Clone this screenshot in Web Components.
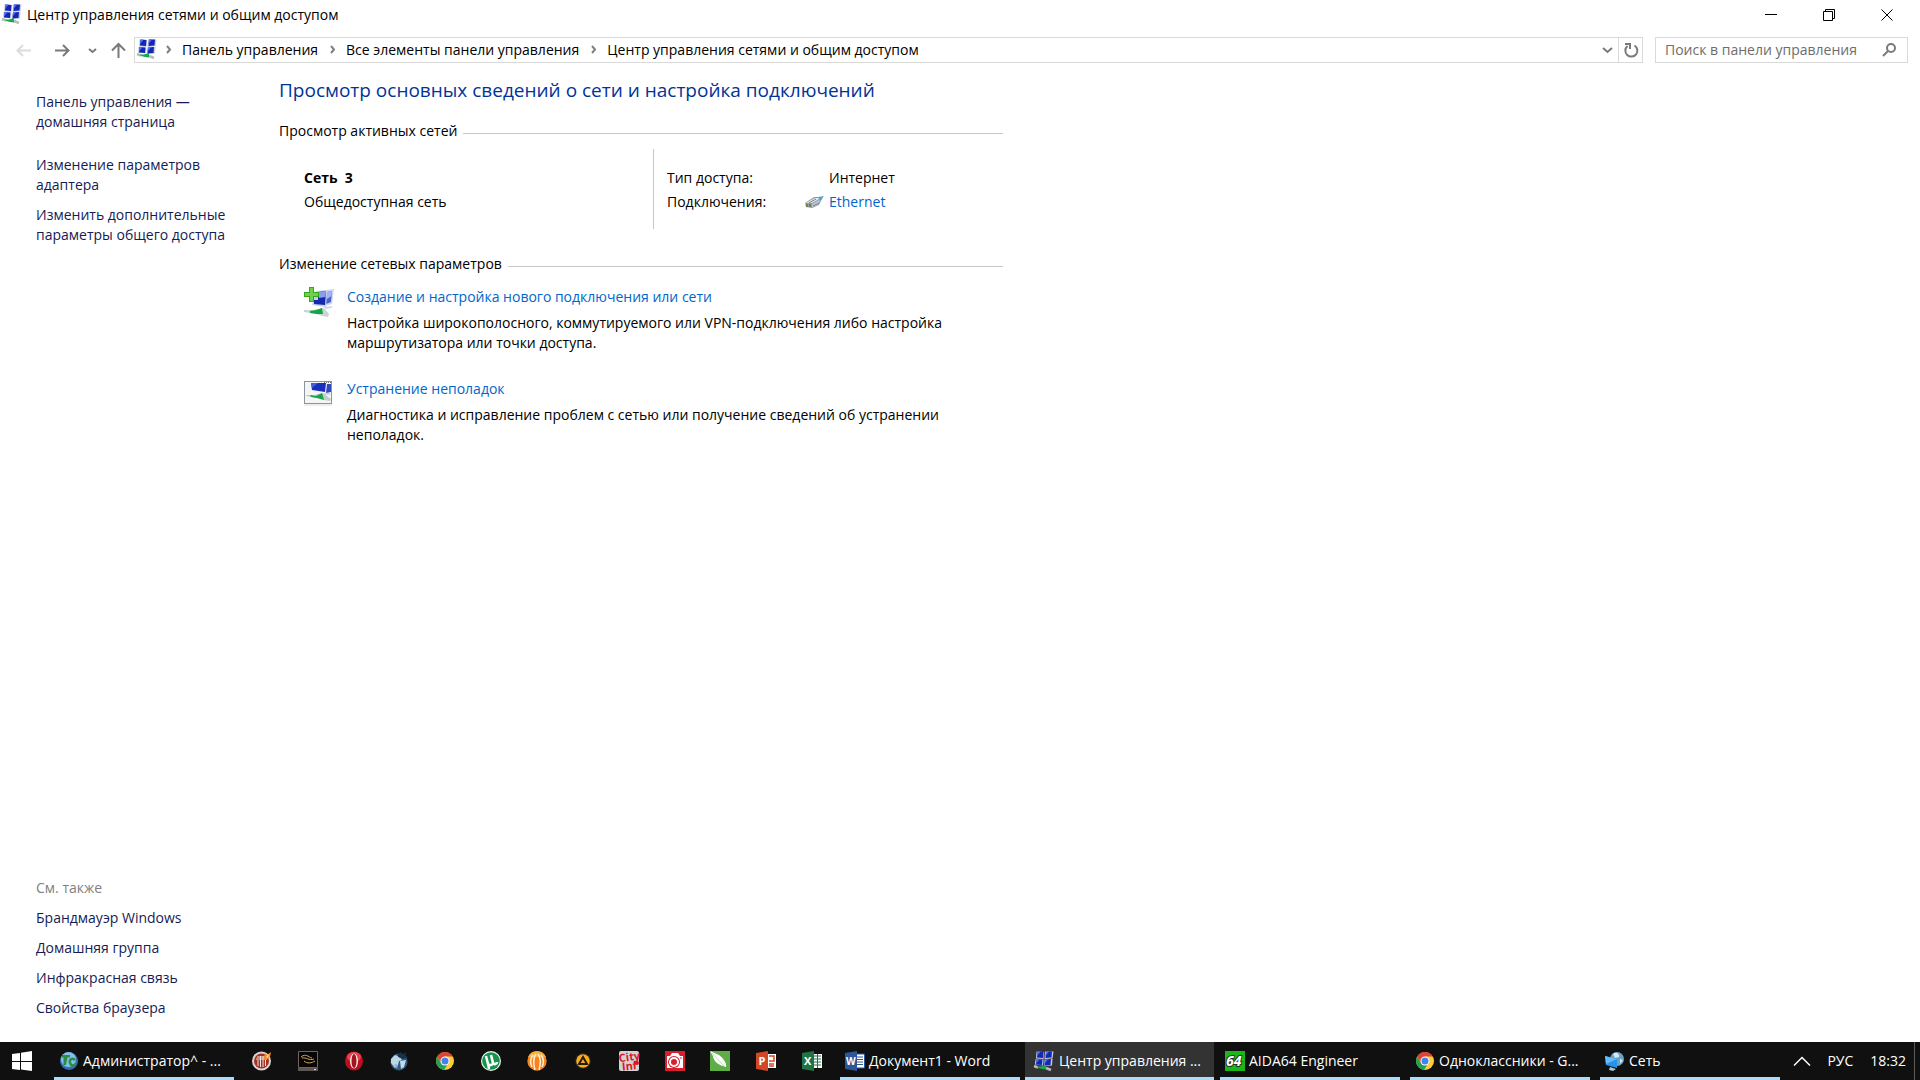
<!DOCTYPE html>
<html lang="ru">
<head>
<meta charset="utf-8">
<title>Центр управления сетями и общим доступом</title>
<style>
  html, body { height: 100%; }
  body {
    margin: 0;
    background: #fff;
    color: #000;
    font: 14px/20px "Open Sans", "Noto Sans", sans-serif;
  }
</style>
</head>
<body>
<network-center></network-center>

<script>
const icons = {
  network: `<path d="M1.500 .5l7.500 .5-.5 7-7.500-.5zM10 .5h8.500l-1 7-8 .5zM.5 8l8 .5-.5 6-8-1zM9.500 8.500l8-.5-.5 6.500-8 .5z" fill="#c3cce6"/>
    <path d="M2.500 .5l6 .5-.5 6-6-.5zM11 .5h6l-.5 6-6 .5zM1.500 8l6 .5-.5 5.500-6-.5zM10 8.500l6-.5-.5 6-6 .5z" fill="#1226b8"/>
    <path d="M2.500 .5l3 .3L2 5zM11 .5h3l-3.500 4.500zM1.500 8l3 .3L1 12.500zM10 8.500l3-.3-3.300 4.300z" fill="#5874e4"/>
    <path d="M-1 15l4 1.500M11 17l5 2" stroke="#b4bdb8" stroke-width="2.500"/>
    <path d="M2 15.500l4 0 5-1.500v4.500l-4-.5-4-1z" fill="#18a94c"/>`,
  newConnection: `<path d="M22 3l8-1-2 15-7 2z" fill="#cdd7f2"/><path d="M23 5l5-1-1 11-5 2z" fill="#4a62cf"/>
    <path d="M23 5l5-1-.5 5-4.500 3z" fill="#a4b4f0"/>
    <path d="M12 4l11-1-1 17-14-2z" fill="#c4cfea"/><path d="M14 5l8-1-1 14-11-1v-4h4z" fill="#1428b0"/>
    <path d="M15 5l7-1-.5 6-6.500 1z" fill="#8b9dee"/>
    <path d="M19 20l9-1v2l-6 1z" fill="#d6dae0"/>
    <path d="M0 23l9 0 11-2 5 6-1 3-6-1-6-2-12-2z" fill="#ccd6d0"/>
    <path d="M6 24l6-1 6-2 1 6-6 0-7-1z" fill="#16a34a"/>
    <path d="M5 0h5v5h5v5h-5v5H5v-5H0V5h5z" fill="#36a51f"/><path d="M6 1h3v5h5v3H9v5H6V9H1V6h5z" fill="#6fd04c"/>`,
  troubleshoot: `<rect x=".5" y="2.500" width="27" height="22" fill="#f3f5f7" stroke="#8d949b"/>
    <path d="M0 26h28" stroke="#dcdcdc"/><path d="M20 3.500h7" stroke="#687078" stroke-dasharray="1 1"/>
    <path d="M7 4h15l-1 9-13-2z" fill="#1a2fbd"/><path d="M7 4h7l-6 5z" fill="#4560d8"/>
    <path d="M23 5h4v8l-5 1z" fill="#3149b8"/><path d="M20 14h6v2h-5z" fill="#d2d6dc"/>
    <path d="M2 16l8 0 9-2 8 6-1 2-6-1-6-2-12-2z" fill="#c3cdc8"/><path d="M6 16l6 1 6-3 2 7-7-2-6-1z" fill="#16a34a"/>`,
  ethernet: `<path d="M0 8l9-6 9 0-4 8-7 3-6-1z" fill="#939ca8"/><path d="M1 8l9-5 6 0-9 5z" fill="#e2e6ec"/>
    <path d="M7 9l9-5-3 6-6 2z" fill="#bcc5d2"/>
    <path d="M4 8l7-4M8 11l6-3" stroke="#76818f"/><path d="M1 9h2v3H1zM4 9h2v3H4z" fill="#777f4e"/>
    <path d="M13 2l6-1-4 5z" fill="#49a9cc"/>`,
  start: `<path d="M0 3l8-1v8H0zM9 1.800L20 0v10H9zM0 11h8v8l-8-1zM9 11h11v9L9 18.500z" fill="#fff"/>`,
  commander: `<circle cx="10" cy="10" r="9" fill="#2f72b4"/><circle cx="9.500" cy="8.500" r="7.500" fill="#86bfe9"/>
    <path d="M3 4h8v2.500H8.500L7 14H4.500V6.500H3z" fill="#2c8c45"/><path d="M16 9c-3-3-6 0-5 3s4 3 6 1" fill="none" stroke="#2c8c45" stroke-width="2.500"/>`,
  temple: `<circle cx="9.500" cy="10" r="9.500" fill="#d8d6d3"/><circle cx="9.500" cy="10" r="7.500" fill="#a33127"/>
    <path d="M4 8h11M6 9v6M8.500 5v11M11 5v11M13.500 9v6M5 6h9" stroke="#eee4dd"/>
    <path d="M12 7l1-5 2 2 4-3-1 5-4 3z" fill="#ff8a1c"/><path d="M14 6l3-3-1 4z" fill="#ffe08a"/>`,
  monitor: `<path d="M.5 .5h19v16H.5z" fill="#080605" stroke="#77625a"/><path d="M0 17h20v3H0z" fill="#5e5652"/><path d="M16 18.500h2" stroke="#ddd"/>
    <path d="M3 6c5-4 7 0 11 1M6 10c3 3 8 2 11 0M4 7c4-1 7 3 12 1" stroke="#d5a653" fill="none"/>`,
  opera: `<ellipse cx="10" cy="10" rx="9" ry="9.500" fill="#b8101d"/><ellipse cx="10" cy="6" rx="7" ry="5" fill="#e4434c"/>
    <ellipse cx="10" cy="10" rx="4" ry="7.500" fill="#f8eeee"/><ellipse cx="10" cy="10" rx="2.500" ry="7" fill="#a3121e"/>`,
  globe: `<circle cx="10" cy="11" r="8.500" fill="#315b80"/><path d="M2 8l4-4 5 2 2 3-3 1-1 4-3 3-4-5z" fill="#b9d7e7"/>
    <path d="M11 10l6-1-2 7-3 2z" fill="#c3dbe9"/><path d="M5 13l4 1-1 4z" fill="#83abc7"/><path d="M9 3l3-2 1 2 5-1-2 2 3 3-5 1-5-2z" fill="#15354e"/>`,
  chrome: `<circle cx="10" cy="10" r="9" fill="#fc3"/>
    <path d="M2.200 5.500a9 9 0 0 0 6.800 13.400L13.500 12 6 12z" fill="#21a05a"/>
    <path d="M2.200 5.500A9 9 0 0 1 17.800 5.500H10l-4 6z" fill="#dc4437"/>
    <circle cx="10" cy="10" r="4.500" fill="#fff"/><circle cx="10" cy="10" r="3.500" fill="#3f83ee"/>`,
  torrent: `<circle cx="10" cy="10" r="10" fill="#eef7ef"/><circle cx="10" cy="10" r="8.800" fill="#16934c"/>
    <path d="M5 5l2 8c1 2 5 1 5-1L10 4M12 12c1 2 4 1 4-1M7 12l1 6" fill="none" stroke="#fff" stroke-width="2.500"/>`,
  comet: `<circle cx="10" cy="10" r="9.700" fill="#f98220"/><path d="M10 0a10 10 0 0 1 9 6H1a10 10 0 0 1 9-6z" fill="#fbb040"/>
    <path d="M9 3C6 7 6 12 8 19M11 3c3 4 3 9 1 16M6 4c-3 4-3 8-1 12M14 4c3 4 3 8 1 12" stroke="#fff0d2" stroke-width="1.500" fill="none"/>`,
  aimp: `<circle cx="10" cy="10" r="8" fill="#26221c"/><circle cx="10" cy="10" r="6.800" fill="#f8ac24"/>
    <path d="M10 6l4 7H6z" fill="none" stroke="#2b1c05" stroke-width="2"/>`,
  city: `<rect width="20" height="20" rx="2" fill="#cfd3d7"/>
    <text x="0" y="10" font-size="11" font-weight="700" fill="#e3131f" transform="rotate(-8 9 8)">City</text>
    <text x="3" y="19" font-size="11" font-weight="700" fill="#e3131f" transform="rotate(-5 9 16)">Inf</text><circle cx="18" cy="12" r="2" fill="#e3131f"/>`,
  camera: `<path d="M0 0h20v20H0z" fill="#d91f2d"/><path d="M2 5h3l2-3h6l2 3h3v12H2z" fill="#fff"/>
    <circle cx="9" cy="11" r="6" fill="#d91f2d"/><circle cx="9" cy="11" r="4" fill="none" stroke="#fff" stroke-width="2"/><path d="M15 7h2" stroke="#d91f2d"/>`,
  corel: `<path d="M0 0h20v20H0z" fill="#5fad46"/><path d="M0 0l9 4c4 3 8 8 7 12l-3-1C8 14 3 9 3 5z" fill="#fff"/><path d="M2 2l12 13" stroke="#bfe0b4"/>`,
  powerpoint: `<path d="M11 3h9v14h-9z" fill="#fff"/><path d="M13 5h5v5h-5M13 13h5M13 15h5" stroke="#d24726" stroke-width="1.500" fill="none"/>
    <path d="M0 2l12-2v20L0 18z" fill="#d24726"/><text x="2.500" y="14" font-size="11" font-weight="700" fill="#fff">P</text>`,
  excel: `<path d="M11 3h9v14h-9z" fill="#fff"/><path d="M12 5h7M12 8h7M12 11h7M12 14h7M15.500 3v14" stroke="#217346"/>
    <path d="M0 2l12-2v20L0 18z" fill="#217346"/><text x="2" y="14" font-size="11" font-weight="700" fill="#fff">X</text>`,
  word: `<path d="M11 3h8.500v14H11z" fill="#fff" stroke="#2b579a"/><path d="M12 6h6M12 8.500h6M12 11h6M12 13.500h6" stroke="#2b579a"/>
    <path d="M0 2l12-2v20L0 18z" fill="#2b579a"/><text x="1" y="14" font-size="10" font-weight="700" fill="#fff">W</text>`,
  aida: `<path d="M0 0h20v20H0z" fill="#18b818"/><text x="1" y="15" font-size="14" font-style="italic" font-weight="700" fill="#fff" stroke="#243524" stroke-width="2" paint-order="stroke">64</text>`,
  shared: `<circle cx="12" cy="8" r="7" fill="#6ba3c4"/><path d="M8 3c3-3 7 0 6 3l-4 1zM15 8l3 1-3 4z" fill="#d4e9f2"/>
    <path d="M0 5l12 3v9L1 14z" fill="#2594ea"/><path d="M0 5l12 3-11 5z" fill="#63bdfb"/><path d="M5 16l6 2-3 2-4-1z" fill="#a9c7d6"/>`,
  back: `<path d="M1 7.500h14M7 2L1.500 7.500 7 13" fill="none" stroke="currentColor" stroke-width="2"/>`,
  forward: `<path d="M0 7.500h14M8 2l5.500 5.500L8 13" fill="none" stroke="currentColor" stroke-width="2"/>`,
  up: `<path d="M7.500 15V1M1 7.500L7.500 1 14 7.500" fill="none" stroke="currentColor" stroke-width="2"/>`,
  recent: `<path d="M1 1l3.500 3L8 1" fill="none" stroke="currentColor" stroke-width="2"/>`,
  down: `<path d="M1 1l4.500 4L10 1" fill="none" stroke="currentColor" stroke-width="2"/>`,
  crumb: `<path d="M1 1l3 3.500L1 8" fill="none" stroke="currentColor" stroke-width="2"/>`,
  refresh: `<path d="M10.500 2.500A6 6 0 1 1 3.500 3" fill="none" stroke="currentColor" stroke-width="2"/><path d="M1 1h5v5" fill="none" stroke="currentColor" stroke-width="2"/>`,
  search: `<circle cx="9" cy="5" r="4" fill="none" stroke="currentColor" stroke-width="2"/><path d="M6 8l-5 5" stroke="currentColor" stroke-width="2"/>`,
  minimize: `<path d="M0 5.500h12" stroke="currentColor"/>`,
  restore: `<path d="M.5 2.500h9v9h-9zM2.500 2.500v-2h9v9h-2" fill="none" stroke="currentColor"/>`,
  close: `<path d="M.5 .5l11 11M11.500 .5l-11 11" stroke="currentColor"/>`,
  tray: `<path d="M0 8.500L8 .5l8 8" fill="none" stroke="currentColor" stroke-width="1.500"/>`,
};

function attach(host, html) {
  const template = document.createElement('template');
  template.innerHTML = html;
  host.attachShadow({ mode: 'open' }).appendChild(template.content.cloneNode(true));
}

// <ui-icon name="word" size="20 20">
class UiIcon extends HTMLElement {
  connectedCallback() {
    if (this.shadowRoot) return;
    const [w, h] = (this.getAttribute('size') || '20 20').split(' ');
    attach(this, `
      <style>
        :host { display: inline-flex; flex: none; }
        svg { display: block; overflow: visible; font-family: "Open Sans", sans-serif; }
      </style>
      <svg width="${w}" height="${h}" viewBox="0 0 ${w} ${h}" aria-hidden="true">${icons[this.getAttribute('name')]}</svg>
    `);
  }
}

class TitleBar extends HTMLElement {
  constructor() {
    super();
    attach(this, `
      <style>
        :host { display: flex; align-items: center; height: 30px; padding: 0 4px 0 3px; }
        ui-icon { margin: 0 4px 2px 0; }
        .title { flex: 1; }
        button {
          display: flex; align-items: center; justify-content: center;
          width: 58px; height: 28px; padding: 0; border: 0; background: none; color: #000;
        }
        button ui-icon { margin: 0; }
      </style>
      <ui-icon name="network"></ui-icon>
      <span class="title"><slot></slot></span>
      <button aria-label="Свернуть"><ui-icon name="minimize" size="12 12"></ui-icon></button>
      <button aria-label="Восстановить"><ui-icon name="restore" size="12 12"></ui-icon></button>
      <button aria-label="Закрыть"><ui-icon name="close" size="12 12"></ui-icon></button>
    `);
  }
}

class CrumbLink extends HTMLElement {
  constructor() {
    super();
    attach(this, `
      <style>
        :host { display: flex; align-items: center; color: #808080; }
        a { margin: 0 12px 0 11px; color: #000; text-decoration: none; white-space: nowrap; }
        ui-icon { margin-bottom: 2px; }
      </style>
      <ui-icon name="crumb" size="5 9"></ui-icon><a href="#"><slot></slot></a>
    `);
  }
}

class AddressBar extends HTMLElement {
  constructor() {
    super();
    attach(this, `
      <style>
        :host { display: flex; margin-top: 7px; padding: 0 12px 0 4px; color: #7a7a7a; }
        button {
          display: flex; align-items: center; justify-content: center;
          padding: 0; border: 0; background: none; color: inherit;
        }
        .step { width: 39px; }
        .recent { width: 21px; }
        .up { width: 31px; }
        .back { color: #dcdcdc; }
        .path, .search {
          display: flex; align-items: center; box-sizing: border-box;
          height: 26px; border: 1px solid #d9d9d9;
        }
        .path { flex: 1; padding-left: 3px; }
        .path > ui-icon { margin-bottom: 2px; }
        nav { display: flex; flex: 1; margin-left: 8px; }
        .path button { width: 22px; align-self: stretch; }
        .path .refresh { width: 24px; border-left: 1px solid #d9d9d9; }
        .search { width: 253px; margin-left: 12px; padding: 0 11px 0 9px; }
        input {
          flex: 1; min-width: 0; padding: 0; border: 0; outline: 0;
          background: none; font: inherit;
        }
        input::placeholder { color: #6d6d6d; opacity: 1; }
      </style>
      <button class="step back" aria-label="Назад"><ui-icon name="back" size="15 15"></ui-icon></button>
      <button class="step" aria-label="Вперед"><ui-icon name="forward" size="15 15"></ui-icon></button>
      <button class="recent" aria-label="Последние расположения"><ui-icon name="recent" size="9 5"></ui-icon></button>
      <button class="up" aria-label="Вверх"><ui-icon name="up" size="15 15"></ui-icon></button>
      <div class="path">
        <ui-icon name="network"></ui-icon>
        <nav><slot></slot></nav>
        <button aria-label="Предыдущие расположения"><ui-icon name="down" size="11 6"></ui-icon></button>
        <button class="refresh" aria-label="Обновить"><ui-icon name="refresh" size="14 14"></ui-icon></button>
      </div>
      <div class="search">
        <input type="text" aria-label="Поиск" placeholder="Поиск в панели управления">
        <ui-icon name="search" size="14 14"></ui-icon>
      </div>
    `);
  }
}

class SideBar extends HTMLElement {
  constructor() {
    super();
    attach(this, `
      <style>
        :host {
          display: flex; flex-direction: column; justify-content: space-between;
          box-sizing: border-box; flex: none; width: 279px; padding: 29px 36px 24px;
        }
        div { display: flex; flex-direction: column; gap: 10px; }
        ::slotted(a) { color: #151c55; text-decoration: none; }
        ::slotted(a[slot=home]) { margin-bottom: 13px; }
        span { color: #808080; }
      </style>
      <div><slot name="home"></slot><slot name="task"></slot></div>
      <div><span>См. также</span><slot></slot></div>
    `);
  }
}

class SectionBlock extends HTMLElement {
  constructor() {
    super();
    attach(this, `
      <style>
        :host { display: block; }
        header { display: flex; align-items: center; gap: 6px; }
        h2 { margin: 0; font: inherit; }
        header::after { content: ""; flex: 1; height: 1px; margin-top: 5px; background: #c8c8c8; }
      </style>
      <header><h2><slot name="title"></slot></h2></header>
      <slot></slot>
    `);
  }
}

class ActiveNetwork extends HTMLElement {
  constructor() {
    super();
    attach(this, `
      <style>
        :host { display: flex; height: 80px; margin: 8px 0 25px; line-height: 24px; }
        div { box-sizing: border-box; padding-top: 17px; }
        .name { width: 375px; padding-left: 25px; border-right: 1px solid #c8c8c8; }
        b { display: block; white-space: pre; }
        .info { display: grid; grid-template-columns: 138px 24px 1fr; flex: 1; padding-left: 13px; align-content: start; align-items: center; }
        .value { grid-column: 3; }
        a { color: #0066cc; text-decoration: none; }
      </style>
      <div class="name"><b><slot name="name"></slot></b><slot name="kind"></slot></div>
      <div class="info">
        <span>Тип доступа:</span><span class="value"><slot name="access"></slot></span>
        <span>Подключения:</span><ui-icon name="ethernet" size="19 14"></ui-icon><a href="#"><slot name="link"></slot></a>
      </div>
    `);
  }
}

class TaskItem extends HTMLElement {
  constructor() {
    super();
    attach(this, `
      <style>
        :host { display: flex; gap: 13px; margin: 13px 0 26px; padding-left: 25px; }
        a { color: #0066cc; text-decoration: none; }
        p { margin: 6px 0 0; max-width: 630px; }
      </style>
      <slot name="icon"></slot>
      <div><a href="#"><slot name="title"></slot></a><p><slot></slot></p></div>
    `);
  }
}

class TaskButton extends HTMLElement {
  constructor() {
    super();
    attach(this, `
      <style>
        :host { display: flex; width: 190px; height: 38px; }
        button {
          position: relative; display: flex; align-items: center; gap: 4px;
          width: 100%; padding: 0 10px; border: 0; background: none;
          color: #fff; font: inherit; white-space: nowrap;
        }
        button::after { content: ""; position: absolute; left: 5px; right: 5px; bottom: 0; height: 3px; background: #a9dcfb; }
        :host([active]) button { background: #333; }
        :host([active]) button::after { left: 0; right: 0; }
        :host([active]) { width: 189px; margin-right: 1px; }
      </style>
      <button><slot name="icon"></slot><slot></slot></button>
    `);
  }
}

class TaskBar extends HTMLElement {
  constructor() {
    super();
    const pinned = ['temple', 'monitor', 'opera', 'globe', 'chrome', 'torrent', 'comet',
      'aimp', 'city', 'camera', 'corel', 'powerpoint', 'excel'];
    attach(this, `
      <style>
        :host { display: flex; flex: none; height: 38px; background: #101010; color: #fff; }
        button {
          display: flex; align-items: center; justify-content: center;
          width: 46px; padding: 0; border: 0; background: none; color: inherit; font: inherit;
        }
        .start { width: 49px; padding-right: 5px; }
        .pinned { display: flex; width: 596px; }
        .tray { display: flex; align-items: center; gap: 17px; margin-left: auto; }
        .tray button { width: auto; }
        .desktop { width: 5px; height: 38px; border-left: 1px solid #5a5a5a; margin-left: -9px; }
      </style>
      <button class="start" aria-label="Пуск"><ui-icon name="start"></ui-icon></button>
      <slot name="first"></slot>
      <div class="pinned">
        ${pinned.map((name) => `<button aria-label="${name}"><ui-icon name="${name}"></ui-icon></button>`).join('')}
      </div>
      <slot></slot>
      <div class="tray">
        <button aria-label="Скрытые значки"><ui-icon name="tray" size="16 9"></ui-icon></button>
        <button>РУС</button>
        <time>18:32</time>
        <span class="desktop"></span>
      </div>
    `);
  }
}

class NetworkCenter extends HTMLElement {
  constructor() {
    super();
    attach(this, `
      <style>
        :host { display: flex; flex-direction: column; min-height: 100vh; }
        .body { display: flex; flex: 1; }
        main { flex: 1; max-width: 724px; padding-top: 13px; }
        h1 { margin: 0 0 17px; font-size: 19px; line-height: 28px; font-weight: 400; color: #003399; }
      </style>
      <title-bar>Центр управления сетями и общим доступом</title-bar>
      <address-bar>
        <crumb-link>Панель управления</crumb-link>
        <crumb-link>Все элементы панели управления</crumb-link>
        <crumb-link>Центр управления сетями и общим доступом</crumb-link>
      </address-bar>
      <div class="body">
        <side-bar>
          <a href="#" slot="home">Панель управления —<br>домашняя страница</a>
          <a href="#" slot="task">Изменение параметров<br>адаптера</a>
          <a href="#" slot="task">Изменить дополнительные<br>параметры общего доступа</a>
          <a href="#">Брандмауэр Windows</a>
          <a href="#">Домашняя группа</a>
          <a href="#">Инфракрасная связь</a>
          <a href="#">Свойства браузера</a>
        </side-bar>
        <main>
          <h1>Просмотр основных сведений о сети и настройка подключений</h1>
          <section-block>
            <span slot="title">Просмотр активных сетей</span>
            <active-network>
              <span slot="name">Сеть  3</span>
              <span slot="kind">Общедоступная сеть</span>
              <span slot="access">Интернет</span>
              <span slot="link">Ethernet</span>
            </active-network>
          </section-block>
          <section-block>
            <span slot="title">Изменение сетевых параметров</span>
            <task-item>
              <ui-icon slot="icon" name="newConnection" size="30 30"></ui-icon>
              <span slot="title">Создание и настройка нового подключения или сети</span>
              Настройка широкополосного, коммутируемого или VPN-подключения либо настройка маршрутизатора или точки доступа.
            </task-item>
            <task-item>
              <ui-icon slot="icon" name="troubleshoot" size="30 30"></ui-icon>
              <span slot="title">Устранение неполадок</span>
              Диагностика и исправление проблем с сетью или получение сведений об устранении неполадок.
            </task-item>
          </section-block>
        </main>
      </div>
      <task-bar>
        <task-button slot="first"><ui-icon slot="icon" name="commander"></ui-icon>Администратор^ - ...</task-button>
        <task-button><ui-icon slot="icon" name="word"></ui-icon>Документ1 - Word</task-button>
        <task-button active><ui-icon slot="icon" name="network"></ui-icon>Центр управления ...</task-button>
        <task-button><ui-icon slot="icon" name="aida"></ui-icon>AIDA64 Engineer</task-button>
        <task-button><ui-icon slot="icon" name="chrome"></ui-icon>Одноклассники - G...</task-button>
        <task-button><ui-icon slot="icon" name="shared"></ui-icon>Сеть</task-button>
      </task-bar>
    `);
  }
}

customElements.define('ui-icon', UiIcon);
customElements.define('title-bar', TitleBar);
customElements.define('crumb-link', CrumbLink);
customElements.define('address-bar', AddressBar);
customElements.define('side-bar', SideBar);
customElements.define('section-block', SectionBlock);
customElements.define('active-network', ActiveNetwork);
customElements.define('task-item', TaskItem);
customElements.define('task-button', TaskButton);
customElements.define('task-bar', TaskBar);
customElements.define('network-center', NetworkCenter);
</script>
</body>
</html>
